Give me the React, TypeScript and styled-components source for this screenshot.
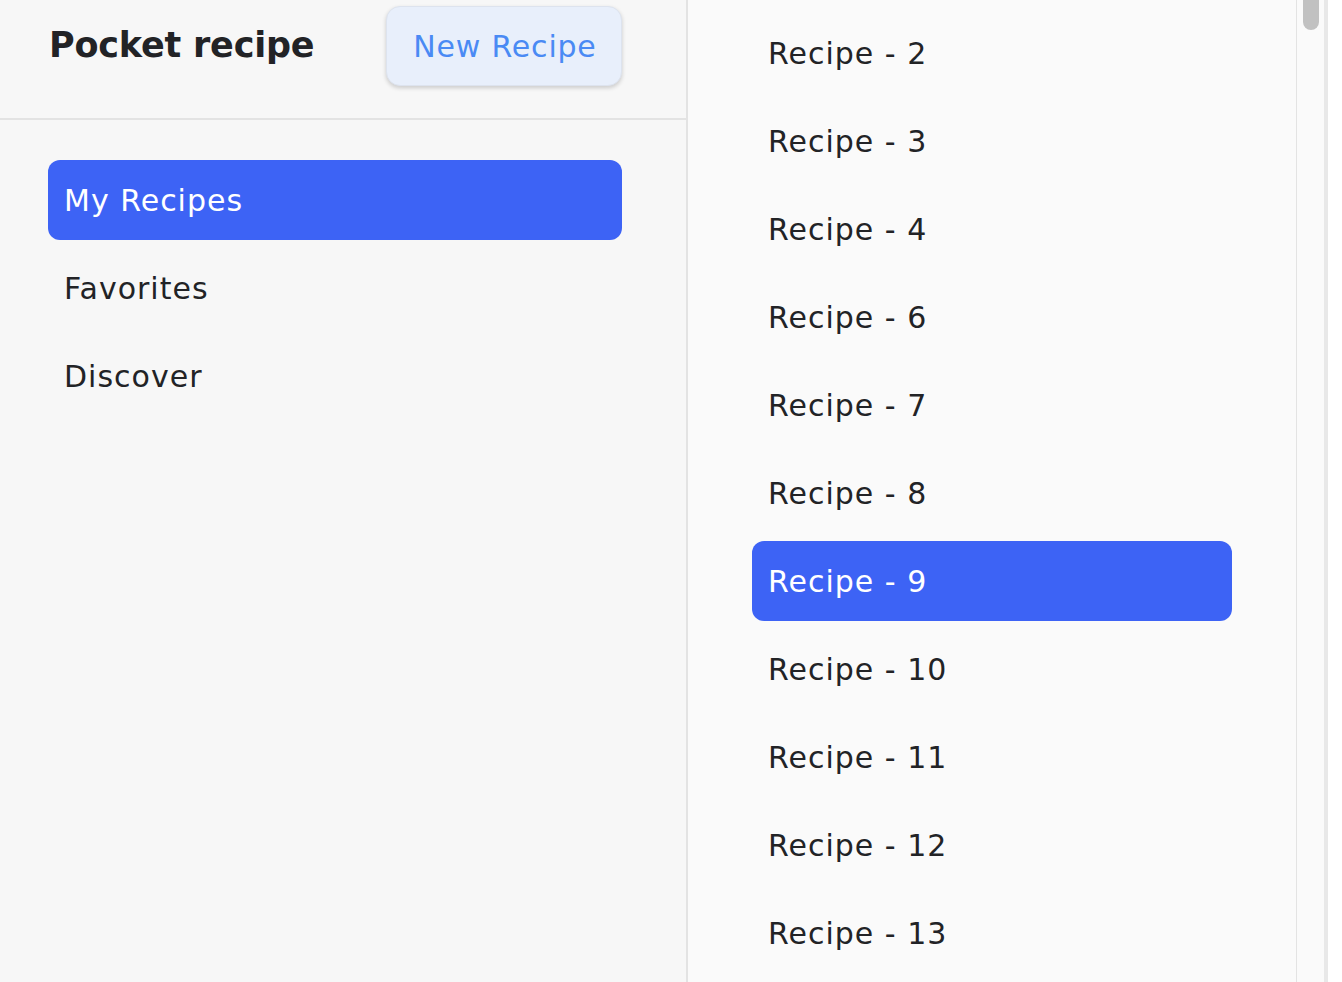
import React from "react";
import styled, { createGlobalStyle } from "styled-components";

const Global = createGlobalStyle`
  html, body { margin: 0; padding: 0; background: #ffffff; }
  body { font-family: "DejaVu Sans", "Noto Sans", sans-serif; color: #222326; }
  * { box-sizing: border-box; }
`;

const Shell = styled.div`
  display: flex;
  width: 1328px;
  height: 982px;
  overflow: hidden;
`;

const Sidebar = styled.aside`
  width: 688px;
  flex: none;
  background: #f7f7f7;
  border-right: 2px solid #e3e3e3;
  display: flex;
  flex-direction: column;
`;

const Header = styled.header`
  height: 120px;
  border-bottom: 2px solid #e3e3e3;
  display: flex;
  align-items: flex-start;
  justify-content: space-between;
  padding: 6px 64px 0 49px;
`;

const Title = styled.h1`
  margin: 17px 0 0;
  font-size: 35px;
  font-weight: 700;
  letter-spacing: -0.2px;
  line-height: 44px;
  color: #222326;
`;

const NewButton = styled.button`
  width: 236px;
  height: 80px;
  border: 1px solid #dde3ee;
  border-radius: 14px;
  background: #e8effb;
  color: #4a8af4;
  font-family: inherit;
  font-size: 30px;
  letter-spacing: 0.8px;
  box-shadow: 0 2px 4px rgba(0, 0, 0, 0.18);
  padding: 0 0 0 2px;
  cursor: pointer;
`;

const Nav = styled.nav`
  display: flex;
  flex-direction: column;
  gap: 8px;
  padding: 40px 64px 0 48px;
`;

const Item = styled.div<{ $active?: boolean }>`
  height: 80px;
  display: flex;
  align-items: center;
  padding-left: 16px;
  border-radius: 12px;
  font-size: 30px;
  letter-spacing: 1px;
  background: ${(p) => (p.$active ? "#3d63f5" : "transparent")};
  color: ${(p) => (p.$active ? "#ffffff" : "#222326")};
`;

const Main = styled.main`
  width: 609px;
  flex: none;
  background: #fafafa;
  border-right: 1px solid #e3e3e3;
`;

const List = styled.div`
  display: flex;
  flex-direction: column;
  gap: 8px;
  width: 480px;
  margin: 13px 0 0 64px;
`;

const Scrollbar = styled.div`
  width: 31px;
  flex: none;
  background: #fafafa;
  border-right: 4px solid #e8e8e8;
  padding-left: 6px;
`;

const Thumb = styled.div`
  width: 16px;
  height: 30px;
  background: #c1c1c1;
  border-radius: 0 0 8px 8px;
`;

const recipes = [2, 3, 4, 6, 7, 8, 9, 10, 11, 12, 13];

export default function App() {
  return (
    <>
      <Global />
      <Shell>
        <Sidebar>
          <Header>
            <Title>Pocket recipe</Title>
            <NewButton>New Recipe</NewButton>
          </Header>
          <Nav>
            <Item $active>My Recipes</Item>
            <Item>Favorites</Item>
            <Item>Discover</Item>
          </Nav>
        </Sidebar>
        <Main>
          <List>
            {recipes.map((n) => (
              <Item key={n} $active={n === 9}>
                Recipe - {n}
              </Item>
            ))}
          </List>
        </Main>
        <Scrollbar>
          <Thumb />
        </Scrollbar>
      </Shell>
    </>
  );
}
